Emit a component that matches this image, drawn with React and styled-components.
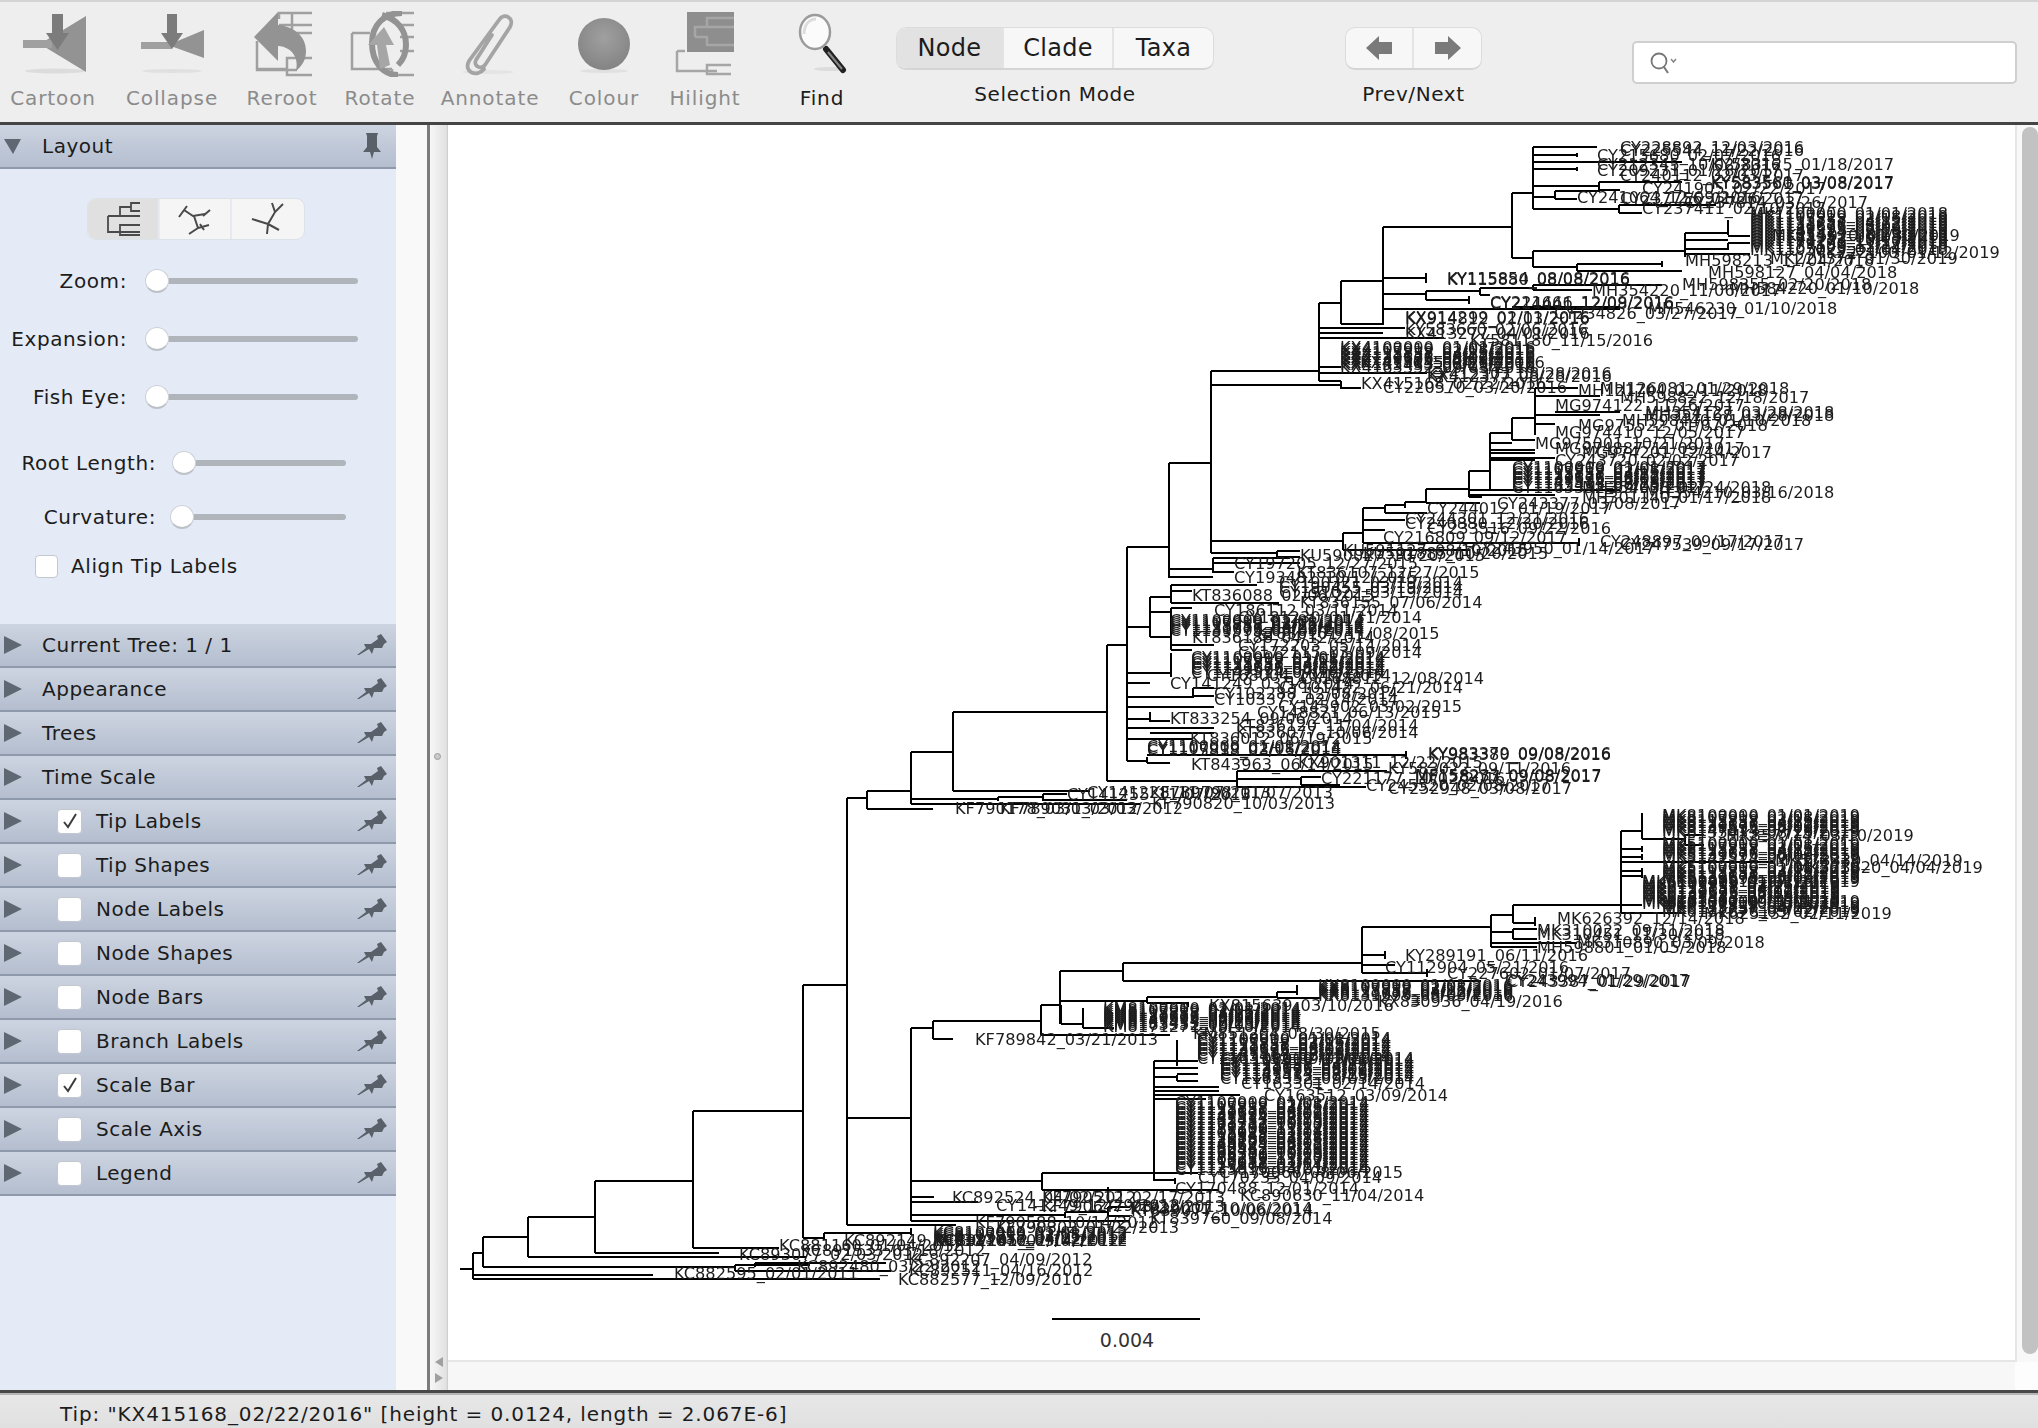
import React from "react";
import styled, { createGlobalStyle } from "styled-components";

const GlobalStyle = createGlobalStyle`
  html, body { margin: 0; padding: 0; background: #eee; }
  * { box-sizing: border-box; }
`;

const App_ = styled.div`
  width: 2038px;
  height: 1428px;
  display: flex;
  flex-direction: column;
  overflow: hidden;
  font-family: "DejaVu Sans", "Liberation Sans", sans-serif;
  font-size: 20px;
  color: #1c1c1c;
`;

/* ---------- toolbar ---------- */
const Toolbar = styled.div`
  height: 125px;
  flex: none;
  display: flex;
  background: #eeeeee;
  border-top: 2px solid #d4d4d4;
  border-bottom: 3px solid #454545;
`;
const Tool = styled.div`
  width: ${(p) => p.$w}px;
  flex: none;
  display: flex;
  flex-direction: column;
  align-items: center;
  padding-top: 9px;
`;
const ToolIcon = styled.svg`
  width: 80px;
  height: 66px;
  display: block;
`;
const ToolLabel = styled.div`
  margin-top: 9px;
  font-size: 20px;
  letter-spacing: 0.9px;
  line-height: 24px;
  color: ${(p) => (p.$off ? "#8b8b8b" : "#1c1c1c")};
`;
const Group = styled.div`
  width: ${(p) => p.$w}px;
  margin-left: ${(p) => p.$ml || 0}px;
  flex: none;
  display: flex;
  flex-direction: column;
  align-items: center;
  padding-top: 25px;
`;
const Seg = styled.div`
  width: 100%;
  height: 43px;
  display: flex;
  background: #f7f7f7;
  border: 1px solid #dcdcdc;
  border-bottom: 2px solid #d5d5d5;
  border-radius: 10px;
  overflow: hidden;
`;
const SegItem = styled.div`
  width: ${(p) => p.$w}px;
  flex: none;
  display: flex;
  align-items: center;
  justify-content: center;
  background: ${(p) => (p.$on ? "#e2e2e2" : "transparent")};
  border-right: ${(p) => (p.$last ? "none" : "2px solid #e4e4e4")};
  font-size: 24px;
  letter-spacing: 0.3px;
`;
const GroupLabel = styled.div`
  margin-top: 12px;
  font-size: 20px;
  letter-spacing: 0.6px;
  line-height: 24px;
`;
const SearchBox = styled.div`
  width: 385px;
  height: 43px;
  margin: 39px 0 0 150px;
  flex: none;
  display: flex;
  align-items: center;
  padding-left: 14px;
  background: #fff;
  border: 2px solid #cfcfcf;
  border-radius: 5px;
`;

/* ---------- body ---------- */
const Body = styled.div`
  flex: 1;
  min-height: 0;
  display: flex;
`;
const Sidebar = styled.div`
  width: 396px;
  flex: none;
  display: flex;
  flex-direction: column;
  background: #e4ebf6;
`;
const PanelRow = styled.div`
  height: 44px;
  flex: none;
  display: flex;
  align-items: center;
  background: linear-gradient(#cdd4e1, #b4becf);
  border-bottom: 2px solid #8e9aac;
  padding: 0 8px 0 4px;
  letter-spacing: 0.5px;
`;
const RowArrow = styled.div`
  width: 38px;
  flex: none;
  display: flex;
  align-items: center;
`;
const RowLabel = styled.div`
  flex: 1;
  margin-left: ${(p) => (p.$check ? p.$gap || 14 : 0)}px;
`;
const CheckBox = styled.div`
  width: ${(p) => p.$size}px;
  height: ${(p) => p.$size}px;
  margin-left: ${(p) => p.$ml}px;
  flex: none;
  display: flex;
  align-items: center;
  justify-content: center;
  background: #fff;
  border: 1px solid #c3c7ce;
  border-radius: 4px;
`;
const LayoutTabs = styled.div`
  width: 218px;
  height: 42px;
  margin: 29px 0 0 87px;
  display: flex;
  background: #f5f5f5;
  border: 1px solid #dde1e8;
  border-radius: 9px;
  overflow: hidden;
  flex: none;
`;
const LayoutTab = styled.div`
  width: ${(p) => p.$w}px;
  flex: none;
  display: flex;
  align-items: center;
  justify-content: center;
  background: ${(p) => (p.$on ? "#e0e0e0" : "transparent")};
  border-right: ${(p) => (p.$last ? "none" : "2px solid #e6e9ee")};
`;
const SliderRow = styled.div`
  height: 24px;
  margin-top: ${(p) => p.$mt}px;
  display: flex;
  align-items: center;
  flex: none;
`;
const SliderLabel = styled.div`
  width: ${(p) => p.$w}px;
  text-align: right;
  letter-spacing: 0.6px;
  flex: none;
`;
const Track = styled.div`
  width: ${(p) => p.$w}px;
  margin-left: ${(p) => p.$ml}px;
  height: 6px;
  background: #b0b5bc;
  border-radius: 3px;
  display: flex;
  align-items: center;
  flex: none;
`;
const Thumb = styled.div`
  width: 24px;
  height: 24px;
  margin-left: -12px;
  flex: none;
  background: #fff;
  border: 1px solid #cdd0d6;
  border-bottom: 2px solid #bcc0c7;
  border-radius: 50%;
`;
const AlignRow = styled.div`
  height: 24px;
  margin-top: 25px;
  display: flex;
  align-items: center;
  letter-spacing: 0.6px;
  flex: none;
`;
const PanelStack = styled.div`
  margin-top: 46px;
  flex: none;
`;
const PinSlot = styled.div`
  width: 32px;
  flex: none;
  display: flex;
  justify-content: center;
`;
const Strip = styled.div`
  width: 31px;
  flex: none;
  background: #f9f9f9;
`;
const Divider = styled.div`
  width: 3px;
  flex: none;
  background: #7c7c7c;
`;
const Gutter = styled.div`
  width: 18px;
  flex: none;
  position: relative;
  display: flex;
  flex-direction: column;
  align-items: center;
  justify-content: flex-end;
  padding-bottom: 7px;
  background: linear-gradient(90deg, #f7f7f7, #e2e2e2 90%, #c8c8c8);
`;
const SplitDot = styled.div`
  position: absolute;
  top: 628px;
  left: 4px;
  width: 7px;
  height: 7px;
  background: #c9c9c9;
  border: 1px solid #9c9c9c;
  border-radius: 50%;
`;
const CanvasColumn = styled.div`
  flex: 1;
  min-width: 0;
  display: flex;
  flex-direction: column;
`;
const CanvasRow = styled.div`
  flex: 1;
  min-height: 0;
  display: flex;
`;
const TreeCanvas = styled.div`
  flex: 1;
  min-width: 0;
  background: #fff;
  border-bottom: 2px solid #e6e6e6;
`;
const VScroll = styled.div`
  width: 23px;
  flex: none;
  background: #f8f8f8;
  border-left: 2px solid #e6e6e6;
  padding: 2px 0 8px 5px;
`;
const VThumb = styled.div`
  height: 100%;
  background: #c2c2c2;
  border-radius: 8px;
`;
const HScroll = styled.div`
  height: 28px;
  flex: none;
  display: flex;
  background: #f7f7f7;
`;
const Corner = styled.div`
  width: 23px;
  margin-left: auto;
  background: #fdfdfd;
`;
const StatusBar = styled.div`
  height: 38px;
  flex: none;
  display: flex;
  align-items: center;
  padding: 6px 0 0 60px;
  background: linear-gradient(#e8e8e8, #e0e0e0);
  border-top: 3px solid #484848;
  box-shadow: inset 0 2px 0 #b5b5b5;
  letter-spacing: 0.9px;
`;

/* ---------- icons ---------- */
const G1 = "#939393";
const G2 = "#7c7c7c";

const CartoonIcon = () => (
  <ToolIcon viewBox="0 0 80 66">
    <ellipse cx="42" cy="60" rx="30" ry="2.5" fill="#dcdcdc" />
    <polygon points="27,33 73,5 73,61" fill={G1} />
    <rect x="10" y="29" width="29" height="8" fill="#a0a0a0" />
    <path d="M39 3h11v19h6L44.500 39 33 22h6z" fill={G2} />
  </ToolIcon>
);
const CollapseIcon = () => (
  <ToolIcon viewBox="0 0 80 66">
    <ellipse cx="40" cy="60" rx="30" ry="2" fill="#e0e0e0" />
    <polygon points="36,34 72,19 72,47" fill={G1} />
    <rect x="9" y="31" width="31" height="7" fill="#a0a0a0" />
    <path d="M35 3h10v19h6L40 38 29 22h6z" fill={G2} />
  </ToolIcon>
);
const RerootIcon = () => (
  <ToolIcon viewBox="0 0 80 66">
    <path d="M15 30v29h40M15 58h30M45 58V47h25M45 60v4h25M37 8V2h33M37 14h33M37 22h33M50 2v20" fill="none" stroke="#a0a0a0" strokeWidth="2.500" />
    <path d="M12 26 36 1v13c14 1 28 10 28 26 0 9-4 15-10 20 3-12-3-24-18-25v15z" fill={G1} />
  </ToolIcon>
);
const RotateIcon = () => (
  <ToolIcon viewBox="0 0 80 66">
    <path d="M12 22v36h40M12 22h18M52 58v6h22M46 2h28M56 14h18M60 26h14M60 40h14" fill="none" stroke="#a0a0a0" strokeWidth="2.500" />
    <path d="M62 2c-18 0-30 12-30 30s10 32 26 32" fill="none" stroke={G1} strokeWidth="6" />
    <path d="M42 4c14 4 24 14 24 30 0 8-3 15-8 20" fill="none" stroke={G1} strokeWidth="6" />
    <path d="M44 16 28 34h9l3 24 10-4-4-20h8z" fill="#a6a6a6" />
  </ToolIcon>
);
const ClipIcon = () => (
  <ToolIcon viewBox="0 0 80 66">
    <ellipse cx="38" cy="61" rx="26" ry="2" fill="#e4e4e4" />
    <path d="M42 24 26 49c-3 6 5 10 9 5L60 16c5-9-6-15-11-7L19 50c-6 11 8 17 15 8" fill="none" stroke="#a4a4a4" strokeWidth="3.800" strokeLinecap="round" />
  </ToolIcon>
);
const ColourIcon = () => (
  <ToolIcon viewBox="0 0 80 66">
    <defs>
      <radialGradient id="ball" cx="50%" cy="38%" r="65%">
        <stop offset="0" stopColor="#a0a0a0" />
        <stop offset="1" stopColor="#828282" />
      </radialGradient>
    </defs>
    <ellipse cx="40" cy="60" rx="24" ry="2" fill="#e0e0e0" />
    <circle cx="40" cy="33" r="26" fill="url(#ball)" />
  </ToolIcon>
);
const HilightIcon = () => (
  <ToolIcon viewBox="0 0 80 66">
    <path d="M12 40v20h40M12 40h8M42 60v-6h24M42 60v3h24" fill="none" stroke="#a6a6a6" strokeWidth="2.500" />
    <rect x="22" y="1" width="47" height="40" fill="#8e8e8e" />
    <path d="M30 26V16h12V7h27M30 26h12v8h27M42 16h27" fill="none" stroke="#a6a6a6" strokeWidth="2.500" />
  </ToolIcon>
);
const FindIcon = () => (
  <ToolIcon viewBox="0 0 80 66">
    <ellipse cx="48" cy="58" rx="16" ry="2" fill="#dcdcdc" />
    <line x1="44" y1="38" x2="61" y2="59" stroke="#222" strokeWidth="6" strokeLinecap="round" />
    <line x1="46" y1="41" x2="60" y2="58" stroke="#888" strokeWidth="2" />
    <ellipse cx="33" cy="21" rx="15" ry="17" fill="#fbfbfb" stroke="#9b9b9b" strokeWidth="2.500" />
    <path d="M22 23c0-9 5-15 12-15" fill="none" stroke="#ddd" strokeWidth="3" />
  </ToolIcon>
);
const MagIcon = () => (
  <svg width="34" height="26" viewBox="0 0 34 26">
    <circle cx="11" cy="11" r="7.500" fill="none" stroke="#777" strokeWidth="1.800" />
    <line x1="16" y1="17" x2="20" y2="23" stroke="#777" strokeWidth="2" />
    <path d="M23 9l2.500 3 2.500-3" fill="none" stroke="#888" strokeWidth="1.500" />
  </svg>
);
const RowTriangle = ({ open }) => (
  <svg width="18" height="18" viewBox="0 0 18 18">
    {open ? <polygon points="0,2 17,2 9,17" fill="#5f6772" /> : <polygon points="0,0 18,9 0,18" fill="#5f6772" />}
  </svg>
);
const SidePin = () => (
  <svg width="32" height="24" viewBox="0 0 32 24">
    <path d="M1 22 10 15 8 11 15 11 22 6 21 3 25 1 31 9 28 11 26 15 18 15 16 21 13 16 3 22Z" fill="#5a606a" />
  </svg>
);
const UpPin = () => (
  <svg width="18" height="26" viewBox="0 0 18 26">
    <path d="M3 0h12l-1 3v11l4 5H11l-2 7-2-7H0l4-5V3z" fill="#5a606a" />
  </svg>
);
const RectTreeIcon = () => (
  <svg width="34" height="34" viewBox="0 0 34 34">
    <path d="M2 14v16h32M2 14h12M14 14V5h11M14 14h20M25 5V1h9M25 5v4h9M14 30v-7h20M14 30v3h20" fill="none" stroke="#4a4a4a" strokeWidth="1.800" />
  </svg>
);
const RadialIcon = () => (
  <svg width="34" height="34" viewBox="0 0 34 34">
    <path d="M1 15 9 4M6 8l9 6 12-2M32 8l-7 6M16 14l4 12M20 26l-9 6M20 26l11-3M22 22l4 6" fill="none" stroke="#4a4a4a" strokeWidth="2" />
  </svg>
);
const PolarIcon = () => (
  <svg width="34" height="34" viewBox="0 0 34 34">
    <path d="M1 17 17 22 24 10 32 2M24 10 21 1M17 22 28 28M17 22l-1 10" fill="none" stroke="#4a4a4a" strokeWidth="2" />
  </svg>
);
const PrevArrow = () => (
  <svg width="26" height="26" viewBox="0 0 26 26">
    <path d="M0 13 13 1v6h13v12H13v6z" fill="#7a7a7a" />
  </svg>
);
const NextArrow = () => (
  <svg width="26" height="26" viewBox="0 0 26 26">
    <path d="M26 13 13 1v6H0v12h13v6z" fill="#7a7a7a" />
  </svg>
);
const GutterArrows = () => (
  <svg width="12" height="26" viewBox="0 0 12 26">
    <polygon points="2,5 10,0 10,10" fill="#a0a0a0" />
    <polygon points="10,21 2,16 2,26" fill="#a0a0a0" />
  </svg>
);

/* ---------- tree data: horizontal [x1,x2,y], vertical [x,y1,y2], labels [x,yCentre,text] ---------- */
const H = [
  [460,473,1269],[473,483,1253],[473,653,1275],[473,880,1279],[483,735,1267],[735,810,1265],[735,891,1271],[755,886,1263],
  [483,528,1237],[528,806,1257],[528,595,1217],[595,719,1253],[595,693,1181],[693,779,1248],[693,803,1111],[803,824,1238],[824,911,1233],
  [803,847,985],[847,911,1118],[847,956,1225],[911,933,1028],[933,953,1039],[933,1041,1021],[1041,1170,1035],[1041,1061,1005],[1061,1083,1024],[1083,1114,1028],
  [1060,1123,971],[1123,1362,963],[1123,1481,981],[1060,1147,1001],[1147,1277,997],[1147,1188,1003],[1277,1297,992],[1277,1320,998],
  [911,1042,1181],[1042,1153,1173],[1153,1198,1173],[1154,1175,1180],[1042,1108,1190],[1108,1218,1190],[1154,1177,1061],[1177,1198,1061],[1154,1198,1068],[1154,1177,1077],[1177,1198,1074],[1177,1198,1081],
  [1154,1219,1087],[1154,1219,1091],[1154,1240,1095],[1154,1206,1099],
  [911,934,1197],[911,978,1202],[911,1065,1215],[1065,1108,1212],[1108,1130,1207],[1108,1130,1216],[911,1130,1221],
  [847,867,798],[867,911,791],[867,933,809],[911,953,752],[953,1107,712],[953,1090,791],[911,998,799],[998,1043,797],[1043,1067,794],[1043,1127,800],[911,1140,804],
  [1107,1127,645],[1127,1169,547],[1169,1211,463],[1211,1319,371],[1211,1341,385],[1319,1341,303],[1341,1383,281],[1341,1383,324],[1383,1512,227],
  [1512,1533,193],[1533,1597,147],[1533,1577,155],[1533,1682,162],[1533,1577,169],[1533,1599,186],[1599,1682,182],[1599,1620,190],[1533,1555,197],[1555,1600,191],[1555,1577,199],[1533,1619,209],[1619,1716,205],[1619,1642,213],
  [1512,1533,258],[1533,1685,251],[1685,1728,233],[1728,1750,236],[1685,1728,240],[1685,1728,249],[1728,1750,243],[1685,1750,254],[1533,1577,267],[1577,1662,264],[1577,1682,271],
  [1383,1426,278],[1383,1426,294],[1426,1480,291],[1480,1533,288],[1533,1662,285],[1533,1592,290],[1480,1490,295],[1426,1469,300],[1383,1620,309],[1512,1620,307],
  [1319,1405,328],[1319,1383,333],[1319,1444,338],[1319,1341,367],[1319,1427,373],[1319,1341,381],[1341,1361,388],
  [1211,1343,541],[1343,1363,533],[1363,1579,543],[1343,1470,550],[1211,1277,553],[1277,1300,551],[1277,1300,557],
  [1363,1385,508],[1385,1405,505],[1405,1426,502],[1426,1469,489],[1469,1490,471],[1490,1512,433],[1512,1535,418],[1535,1578,388],[1535,1600,396],[1535,1600,415],[1555,1620,412],[1535,1555,424],[1512,1535,440],
  [1490,1512,443],[1490,1535,450],[1490,1535,453],[1490,1555,458],[1490,1535,460],[1469,1620,490],[1469,1555,495],[1469,1482,497],[1426,1480,503],[1385,1427,513],[1363,1405,520],[1363,1385,530],
  [1169,1213,569],[1169,1213,577],[1213,1290,558],[1213,1300,563],[1213,1234,572],
  [1127,1150,627],[1150,1171,597],[1150,1171,612],[1150,1171,637],[1171,1257,585],[1171,1192,591],[1171,1279,603],[1171,1192,608],[1171,1214,645],[1171,1192,650],
  [1127,1171,673],[1127,1150,683],[1127,1193,697],[1193,1214,688],[1193,1214,696],[1127,1214,707],[1127,1150,719],[1150,1170,721],[1127,1214,728],[1150,1214,733],[1127,1192,739],
  [1127,1147,761],[1147,1406,755],[1147,1170,763],[1107,1237,781],[1237,1387,771],[1237,1301,779],[1301,1321,777],[1301,1340,785],[1237,1366,787],
  [1362,1491,927],[1362,1385,955],[1362,1395,965],[1362,1427,973],[1491,1513,915],[1513,1642,905],[1513,1535,923],[1491,1513,932],[1513,1537,929],[1513,1537,939],[1491,1577,943],[1491,1537,947],
  [1621,1642,831],[1642,1685,839],[1685,1704,835],[1685,1704,845],[1621,1642,849],[1621,1642,857],[1621,1773,862],[1621,1642,871],[1621,1642,876],[1621,1685,913],
  [1052,1200,1319],
];
const V = [
  [473,1253,1279],[483,1237,1267],[528,1217,1257],[595,1181,1253],[693,1111,1248],[735,1265,1271],[755,1263,1267],[824,1233,1240],[911,1228,1235],
  [803,985,1238],[847,798,1225],[911,1028,1221],[933,1021,1039],[1041,1005,1035],[1061,1005,1024],[1083,1008,1028],[1060,971,1024],[1123,963,981],[1147,997,1003],[1188,1002,1007],[1277,992,998],[1297,985,995],
  [1042,1173,1190],[1154,1061,1181],[1177,1040,1066],[1177,1075,1081],[1175,1178,1184],[1108,1187,1194],[1065,1212,1218],[1108,1207,1216],
  [867,791,809],[911,752,804],[953,712,791],[998,797,801],[1043,794,801],
  [1107,645,781],[1127,547,761],[1169,463,578],[1211,371,553],[1319,303,381],[1341,281,324],[1383,227,325],[1512,193,258],[1533,147,209],[1577,153,157],[1577,167,171],[1599,182,190],[1555,191,199],[1619,205,213],
  [1533,251,267],[1685,233,257],[1728,220,235],[1728,243,250],[1577,264,271],[1662,261,267],[1426,273,283],[1426,291,300],[1480,288,295],[1533,285,290],[1469,296,304],[1341,381,389],
  [1343,533,550],[1363,508,543],[1579,538,546],[1277,551,557],[1385,505,513],[1405,502,508],[1426,489,503],[1469,471,497],[1490,433,490],[1512,418,440],[1535,388,435],
  [1213,558,573],[1150,597,637],[1171,585,603],[1171,608,650],[1171,653,677],[1193,688,698],[1150,712,722],[1147,757,763],[1406,751,759],
  [1237,771,787],[1301,777,785],[1362,927,973],[1385,951,959],[1427,969,977],[1491,915,947],[1513,905,923],[1513,929,939],[1535,917,926],
  [1621,831,913],[1642,813,839],[1685,835,845],[1642,846,852],[1642,854,860],[1642,868,878],
];

const date = (i, y) => `${String((i % 12) + 1).padStart(2, "0")}/${String(((i * 7) % 27) + 1).padStart(2, "0")}/${y}`;
const stack = (prefix, x, y0, y1, step, yr) => {
  const out = [];
  let i = 0;
  for (let y = y0; y <= y1; y += step, i++) {
    out.push([x, y, `${prefix}${100000 + ((i * 7919) % 89999)}_${date(i, yr)}`]);
  }
  return out;
};

const LABELS = [
  [1620,147,"CY228892_12/03/2016"],[1620,150,"CY225544_11/22/2016"],[1597,155,"CY215680_02/07/2016"],[1597,164,"CY212345_10/02/2016"],[1711,164,"KY583125_01/18/2017"],
  [1597,170,"CY209231_01/28/2017"],[1620,175,"CY240112_02/03/2017"],[1711,182,"KY583560_03/08/2017"],[1711,183,"KY583561_03/08/2017"],[1642,188,"CY241905_02/22/2017"],
  [1577,197,"CY241064_12/09/2016"],[1620,198,"CY237756_01/26/2017"],[1684,202,"CY237814_03/26/2017"],[1642,208,"CY237411_02/10/2017"],
  ...stack("MK1",1750,213,250,3,2018),
  [1772,235,"MK215020_01/30/2019"],[1812,252,"MK222100_01/12/2019"],[1770,258,"MK221377_01/30/2019"],[1685,260,"MH598213_11/04/2018"],[1708,272,"MH598127_04/04/2018"],
  [1447,278,"KY115854_08/08/2016"],[1447,279,"KY115880_08/08/2016"],[1682,284,"MH598355_02/20/2018"],[1730,288,"MH584220_01/10/2018"],[1592,290,"MH354220_11/06/2017"],[1490,302,"CY221666_12/09/2016"],[1490,303,"CY214441_12/08/2016"],
  [1648,308,"MH546230_01/10/2018"],[1554,313,"CY234826_03/27/2017"],[1405,317,"KX914299_02/11/2016"],[1405,318,"KX914812_01/03/2016"],[1405,329,"KY583660_02/06/2016"],[1405,333,"KX413277_04/01/2016"],[1470,340,"KY581180_11/15/2016"],
  ...stack("KX4",1340,347,367,2.500,2016),
  [1360,362,"KX417655_04/14/2016"],[1427,373,"KX412303_08/28/2016"],[1427,376,"KX412377_08/28/2016"],[1361,383,"KX415168_02/22/2016"],[1383,387,"CY220570_03/20/2016"],
  [1600,388,"MH126081_01/29/2018"],[1578,390,"MH121704_02/11/2018"],[1620,397,"MH598822_12/18/2017"],[1555,405,"MG974122_11/26/2017"],[1645,412,"MH354127_03/28/2018"],[1645,415,"MH351168_03/28/2018"],
  [1622,420,"MH598440_01/10/2018"],[1578,425,"MG975522_01/07/2018"],[1555,432,"MG974410_12/05/2017"],[1535,443,"MG975001_10/21/2017"],[1555,448,"MG974887_11/09/2017"],[1582,452,"MG974201_12/14/2017"],[1555,460,"CY243720_02/02/2017"],
  ...stack("CY1",1512,467,487,2.500,2017),
  [1582,487,"MH354003_02/24/2018"],[1645,492,"MH354210_03/16/2018"],[1582,497,"MH301140_01/17/2018"],[1497,503,"CY243377_03/08/2017"],[1427,508,"CY244012_01/19/2017"],
  [1405,518,"CY244301_12/21/2016"],[1405,523,"CY240880_12/30/2016"],[1427,528,"CY233516_09/22/2016"],[1383,537,"CY216809_09/12/2017"],[1600,541,"CY248897_09/17/2017"],[1620,544,"CY247539_09/17/2017"],
  [1471,548,"CY243950_01/14/2017"],[1343,550,"KU591127_08/10/2015"],[1300,555,"KU590027_10/20/2015"],[1363,553,"KU591885_10/20/2015"],
  [1234,563,"CY197205_12/27/2015"],[1297,572,"KT836107_12/27/2015"],[1234,577,"CY193482_10/12/2015"],[1279,582,"CY190321_03/19/2014"],[1279,587,"CY190455_03/19/2014"],[1279,592,"CY191022_03/19/2014"],
  [1192,595,"KT836088_02/06/2015"],[1300,602,"KT836155_07/06/2014"],[1214,610,"CY186112_03/11/2014"],[1238,617,"CY181230_01/31/2014"],
  ...stack("CY1",1170,620,630,2,2014),
  [1257,633,"KT836101_11/08/2015"],[1192,637,"KT836188_04/12/2014"],[1238,645,"CY172203_05/14/2014"],[1238,652,"CY172115_03/09/2014"],
  ...stack("CY1",1191,657,673,2.500,2014),
  [1300,678,"CY168812_12/08/2014"],[1207,675,"CY168004_10/12/2014"],[1170,683,"CY141249_03/18/2014"],[1279,687,"CY101422_06/21/2014"],[1214,693,"CY102288_12/08/2014"],[1214,699,"CY103377_02/14/2014"],
  [1278,706,"CY145902_03/02/2015"],[1257,712,"CY148821_06/13/2015"],[1170,718,"KT833254_09/06/2014"],[1236,725,"KT836120_11/04/2014"],[1236,732,"KT836077_10/06/2014"],[1190,738,"KT836012_06/19/2015"],
  ...stack("CY1",1147,746,751,2,2014),
  [1428,753,"KY983379_09/08/2016"],[1428,754,"KY983380_09/08/2016"],[1298,762,"KX901311_12/22/2015"],[1191,764,"KT843963_06/14/2015"],[1388,768,"KY583022_09/11/2016"],[1415,775,"MF158233_09/08/2017"],[1415,776,"MF158277_09/08/2017"],
  [1321,778,"CY221177_10/02/2016"],[1366,785,"CY245520_02/08/2017"],[1388,788,"CY252948_03/08/2017"],
  [1087,792,"CY141228_11/07/2013"],[1150,792,"KF789798_11/07/2013"],[1067,794,"CY141255_11/07/2013"],[1152,803,"KF790820_10/03/2013"],[955,808,"KF790178_03/03/2012"],[1000,808,"KF789031_03/03/2012"],
  [1405,955,"KY289191_06/11/2016"],[1385,967,"CY112904_05/21/2016"],[1447,973,"CY227602_01/07/2017"],[1505,980,"CY243994_01/29/2017"],[1507,981,"CY243387_01/29/2017"],
  ...stack("KX8",1318,985,995,2,2016),
  [1209,1005,"KX815639_03/10/2016"],[1378,1001,"KX830936_04/19/2016"],
  ...stack("KM8",1103,1008,1026,2,2014),
  [975,1039,"KF789842_03/21/2013"],[1193,1033,"KM851204_08/30/2015"],
  ...stack("CY1",1197,1038,1058,2.500,2014),
  ...stack("CY1",1220,1058,1078,2.500,2014),
  [1241,1083,"CY163301_02/14/2014"],[1264,1095,"CY163512_03/09/2014"],
  ...stack("CY1",1175,1102,1170,2.500,2014),
  [1219,1172,"CY170066_08/06/2015"],[1198,1177,"CY170233_04/09/2014"],[1175,1188,"CY170488_12/01/2014"],[1240,1195,"KC890630_11/04/2014"],
  [952,1197,"KC892524_04/02/2012"],[1042,1197,"KF790512_02/17/2013"],[996,1205,"CY141249_12/29/2013"],[1042,1206,"KF790647_03/22/2013"],[1130,1208,"KT839001_10/06/2014"],[1131,1210,"KT839077_10/06/2014"],
  [1150,1218,"KT839760_09/08/2014"],[975,1222,"KF790588_10/14/2012"],[996,1227,"KF790302_01/22/2013"],
  ...stack("KC8",933,1232,1240,2,2012),
  [935,1240,"KC892145_02/14/2012"],[844,1240,"KC892149_01/30/2012"],[779,1245,"KC881160_01/04/2012"],[801,1250,"KC891533_03/18/2012"],[739,1254,"KC893077_02/03/2012"],[908,1259,"KC892207_04/09/2012"],
  [797,1266,"KC892480_03/22/2012"],[909,1270,"KC892511_04/16/2012"],[674,1273,"KC882595_02/01/2011"],[898,1279,"KC882577_12/09/2010"],
  ...stack("MK8",1662,815,833,2.500,2019),
  [1726,835,"MK857714_03/10/2019"],
  ...stack("MK5",1662,843,860,2.500,2019),
  [1795,867,"MK573620_04/04/2019"],[1775,860,"MK573330_04/14/2019"],
  ...stack("MK5",1662,866,883,2.500,2019),
  ...stack("MK6",1642,881,904,2.500,2019),
  ...stack("MK6",1662,901,912,2.500,2019),
  [1704,913,"MK625132_02/11/2019"],[1557,918,"MK626392_12/14/2018"],[1537,930,"MK310022_09/11/2018"],[1537,934,"MK310451_11/30/2018"],[1577,942,"MK310890_03/09/2018"],[1537,947,"MH598801_01/05/2018"],
];

const TreePlot = () => (
  <svg width="1565" height="1233" viewBox="448 125 1565 1233" style={{ display: "block" }}>
    <g stroke="#000" strokeWidth="2" shapeRendering="crispEdges">
      {H.map(([a, b, y], i) => (
        <line key={i} x1={a} x2={b} y1={y} y2={y} />
      ))}
      {V.map(([x, a, b], i) => (
        <line key={i} x1={x} x2={x} y1={a} y2={b} />
      ))}
    </g>
    <g fontFamily="DejaVu Sans, sans-serif" fontSize="16.2" fill="#1c1c1c" style={{ filter: "blur(0.35px)" }}>
      {LABELS.map(([x, y, t], i) => (
        <text key={i} x={x} y={y + 5.500}>
          {t}
        </text>
      ))}
    </g>
    <text x="1127" y="1347" fontFamily="DejaVu Sans, sans-serif" fontSize="19" fill="#333" textAnchor="middle">
      0.004
    </text>
  </svg>
);

const tools = [
  { w: 106, label: "Cartoon", Icon: CartoonIcon, off: true },
  { w: 132, label: "Collapse", Icon: CollapseIcon, off: true },
  { w: 88, label: "Reroot", Icon: RerootIcon, off: true },
  { w: 108, label: "Rotate", Icon: RotateIcon, off: true },
  { w: 112, label: "Annotate", Icon: ClipIcon, off: true },
  { w: 116, label: "Colour", Icon: ColourIcon, off: true },
  { w: 86, label: "Hilight", Icon: HilightIcon, off: true },
  { w: 148, label: "Find", Icon: FindIcon },
];

const panels = [
  { label: "Current Tree: 1 / 1" },
  { label: "Appearance" },
  { label: "Trees" },
  { label: "Time Scale" },
  { label: "Tip Labels", check: true, on: true },
  { label: "Tip Shapes", check: true },
  { label: "Node Labels", check: true },
  { label: "Node Shapes", check: true },
  { label: "Node Bars", check: true },
  { label: "Branch Labels", check: true },
  { label: "Scale Bar", check: true, on: true },
  { label: "Scale Axis", check: true },
  { label: "Legend", check: true },
];

const sliders = [
  { label: "Zoom:", mt: 29, lw: 127, ml: 30, w: 201 },
  { label: "Expansion:", mt: 34, lw: 127, ml: 30, w: 201 },
  { label: "Fish Eye:", mt: 34, lw: 127, ml: 30, w: 201 },
  { label: "Root Length:", mt: 42, lw: 156, ml: 28, w: 162 },
  { label: "Curvature:", mt: 30, lw: 156, ml: 26, w: 164 },
];

export default function App() {
  return (
    <App_>
      <GlobalStyle />
      <Toolbar>
        {tools.map(({ w, label, Icon, off }) => (
          <Tool key={label} $w={w}>
            <Icon />
            <ToolLabel $off={off}>{label}</ToolLabel>
          </Tool>
        ))}
        <Group $w={318}>
          <Seg>
            <SegItem $w={107} $on>Node</SegItem>
            <SegItem $w={110}>Clade</SegItem>
            <SegItem $w={99} $last>Taxa</SegItem>
          </Seg>
          <GroupLabel>Selection Mode</GroupLabel>
        </Group>
        <Group $w={137} $ml={131}>
          <Seg>
            <SegItem $w={68}><PrevArrow /></SegItem>
            <SegItem $w={67} $last><NextArrow /></SegItem>
          </Seg>
          <GroupLabel>Prev/Next</GroupLabel>
        </Group>
        <SearchBox>
          <MagIcon />
        </SearchBox>
      </Toolbar>

      <Body>
        <Sidebar>
          <PanelRow>
            <RowArrow><RowTriangle open /></RowArrow>
            <RowLabel>Layout</RowLabel>
            <PinSlot><UpPin /></PinSlot>
          </PanelRow>
          <LayoutTabs>
            <LayoutTab $w={72} $on><RectTreeIcon /></LayoutTab>
            <LayoutTab $w={72}><RadialIcon /></LayoutTab>
            <LayoutTab $w={72} $last><PolarIcon /></LayoutTab>
          </LayoutTabs>
          {sliders.map((s) => (
            <SliderRow key={s.label} $mt={s.mt}>
              <SliderLabel $w={s.lw}>{s.label}</SliderLabel>
              <Track $ml={s.ml} $w={s.w}><Thumb /></Track>
            </SliderRow>
          ))}
          <AlignRow>
            <CheckBox $size={23} $ml={35} />
            <RowLabel $check $gap={13}>Align Tip Labels</RowLabel>
          </AlignRow>
          <PanelStack>
            {panels.map((p) => (
              <PanelRow key={p.label}>
                <RowArrow><RowTriangle /></RowArrow>
                {p.check && (
                  <CheckBox $size={25} $ml={15}>
                    {p.on && (
                      <svg width="16" height="16" viewBox="0 0 16 16">
                        <path d="M2 9l4 5L14 1" fill="none" stroke="#3c3c3c" strokeWidth="2" />
                      </svg>
                    )}
                  </CheckBox>
                )}
                <RowLabel $check={p.check}>{p.label}</RowLabel>
                <SidePin />
              </PanelRow>
            ))}
          </PanelStack>
        </Sidebar>
        <Strip />
        <Divider />
        <Gutter>
          <SplitDot />
          <GutterArrows />
        </Gutter>
        <CanvasColumn>
          <CanvasRow>
            <TreeCanvas>
              <TreePlot />
            </TreeCanvas>
            <VScroll>
              <VThumb />
            </VScroll>
          </CanvasRow>
          <HScroll>
            <Corner />
          </HScroll>
        </CanvasColumn>
      </Body>

      <StatusBar>Tip: "KX415168_02/22/2016" [height = 0.0124, length = 2.067E-6]</StatusBar>
    </App_>
  );
}
